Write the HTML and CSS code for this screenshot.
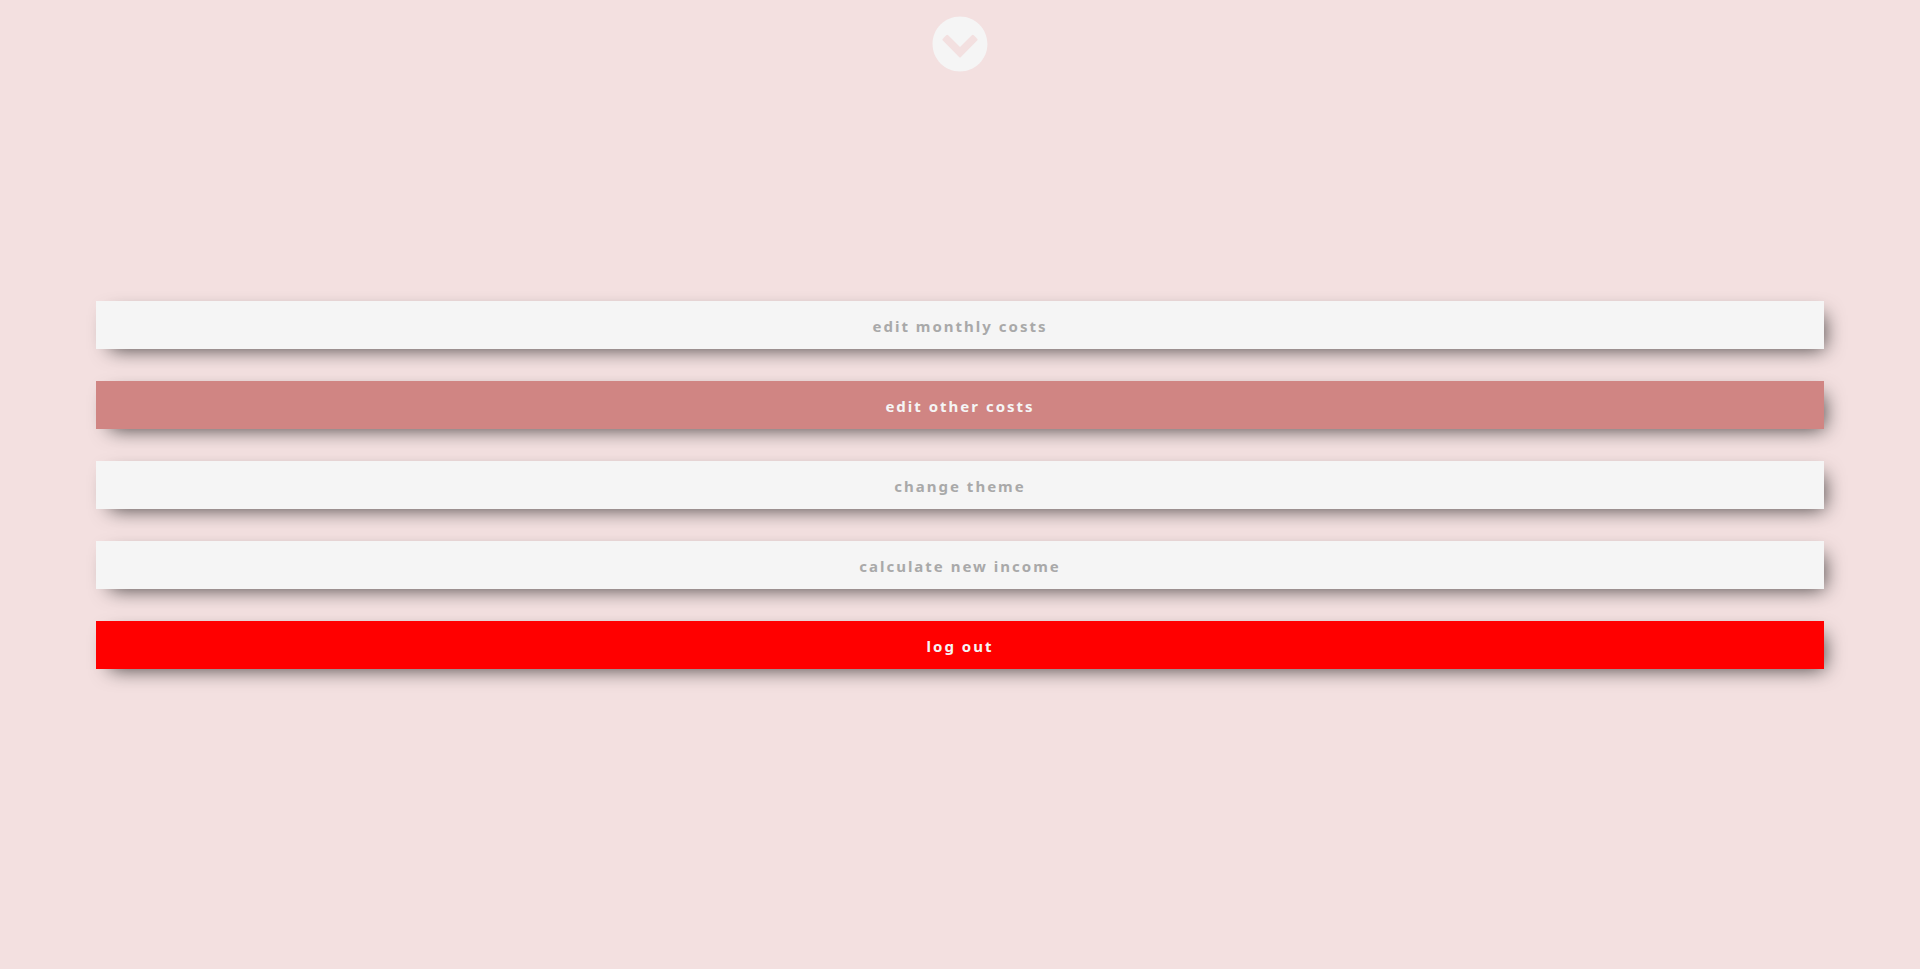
FILE: index.html
```html
<!DOCTYPE html>
<html lang="en">
<head>
  <meta charset="utf-8">
  <meta name="viewport" content="width=device-width, initial-scale=1">
  <title>Settings</title>
  <link rel="stylesheet" href="styles.css">
</head>
<body class="page">
  <header class="top">
    <button class="close" type="button" aria-label="Close menu">
      <svg class="close-icon" viewBox="0 0 512 512" aria-hidden="true">
        <path fill="currentColor" d="M507 256c0 139-112 251-251 251S5 395 5 256 117 5 256 5s251 112 251 251zM262 376L413 225q9-9 0-18l-31-31q-9-9-18 0L256 284 148 176q-9-9-18 0l-31 31q-9 9 0 18l151 151q6 6 12 0z"/>
      </svg>
    </button>
  </header>
  <main class="menu">
    <button class="item" type="button">edit monthly costs</button>
    <button class="item item-active" type="button">edit other costs</button>
    <button class="item" type="button">change theme</button>
    <button class="item" type="button">calculate new income</button>
    <button class="item item-danger" type="button">log out</button>
  </main>
</body>
</html>
```
FILE: styles.css
```css
* {
  box-sizing: border-box;
}

.page {
  display: grid;
  grid-template-rows: auto 1fr auto;
  min-height: 100vh;
  margin: 0;
  background: #f3e0e0;
  font-family: "Segoe UI", "Noto Sans", "Open Sans", sans-serif;
}

.page::after {
  content: "";
  height: 71px;
}

.top {
  display: flex;
  justify-content: center;
  padding-top: 16px;
}

.close {
  padding: 0;
  border: 0;
  background: none;
  color: #f5f5f5;
  cursor: pointer;
}

.close-icon {
  display: block;
  width: 56px;
  height: 56px;
}

.menu {
  display: flex;
  flex-direction: column;
  justify-content: center;
  gap: 32px;
  padding: 0 5%;
}

.item {
  height: 48px;
  padding: 2px 0 0;
  border: 0;
  background: #f5f5f5;
  box-shadow: 7px 7px 20px -7px rgba(0, 0, 0, 0.75);
  color: #a9a9a9;
  font: inherit;
  font-size: 15px;
  font-weight: 700;
  line-height: 24px;
  letter-spacing: 2px;
  cursor: pointer;
}

.item-active {
  background: #d08583;
  color: #f5f5f5;
}

.item-danger {
  background: #ff0000;
  color: #f5f5f5;
}
```
